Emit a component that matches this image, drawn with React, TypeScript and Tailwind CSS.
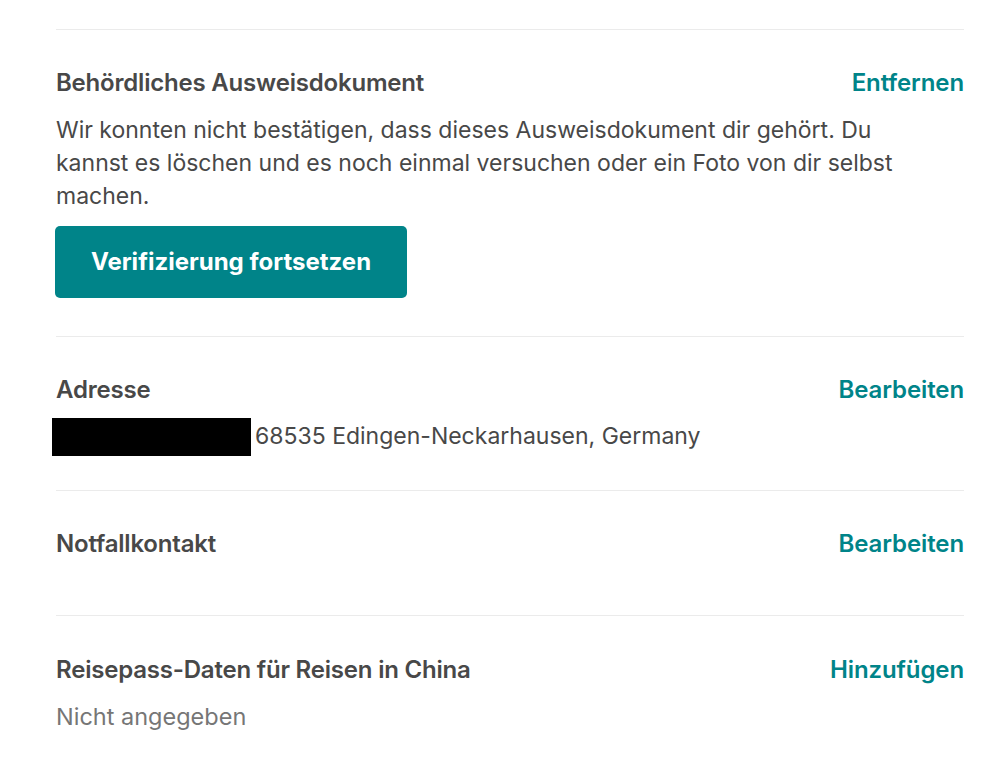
const font = { fontFamily: 'Inter, "Noto Sans", sans-serif' };

function Row({ title, action }: { title: string; action: string }) {
  return (
    <div className="flex justify-between items-center h-[28px]">
      <div className="text-[24px] font-semibold text-[#484848] tracking-[-0.2px]">{title}</div>
      <a className="text-[24px] font-semibold text-[#008489] tracking-[-0.1px] cursor-pointer">{action}</a>
    </div>
  );
}

export default function App() {
  return (
    <div className="bg-white min-h-[757px] pl-[56px] pr-[35px] pt-[29px]" style={font}>
      <section className="border-t border-[#ebebeb] pt-[39px] pb-[38px]">
        <Row title="Behördliches Ausweisdokument" action="Entfernen" />
        <p className="mt-[17px] max-w-[860px] text-[23px] leading-[33px] text-[#484848]">
          Wir konnten nicht bestätigen, dass dieses Ausweisdokument dir gehört. Du kannst es löschen und es noch einmal versuchen oder ein Foto von dir selbst machen.
        </p>
        <button className="mt-[13px] -ml-px h-[72px] w-[352px] rounded-[5px] bg-[#008489] text-white text-[24px] font-bold">
          Verifizierung fortsetzen
        </button>
      </section>

      <section className="border-t border-[#ebebeb] pt-[39px] pb-[37px]">
        <Row title="Adresse" action="Bearbeiten" />
        <div className="mt-[16px] flex items-center h-[33px] text-[23px] text-[#484848]">
          <span className="-ml-[4px] mr-[4px] inline-block w-[199px] h-[38px] bg-black" />
          68535 Edingen-Neckarhausen, Germany
        </div>
      </section>

      <section className="border-t border-[#ebebeb] pt-[39px] pb-[57px]">
        <Row title="Notfallkontakt" action="Bearbeiten" />
      </section>

      <section className="border-t border-[#ebebeb] pt-[40px] pb-[30px]">
        <Row title="Reisepass-Daten für Reisen in China" action="Hinzufügen" />
        <div className="mt-[16px] h-[33px] leading-[33px] text-[23.5px] text-[#767676]">Nicht angegeben</div>
      </section>
    </div>
  );
}
